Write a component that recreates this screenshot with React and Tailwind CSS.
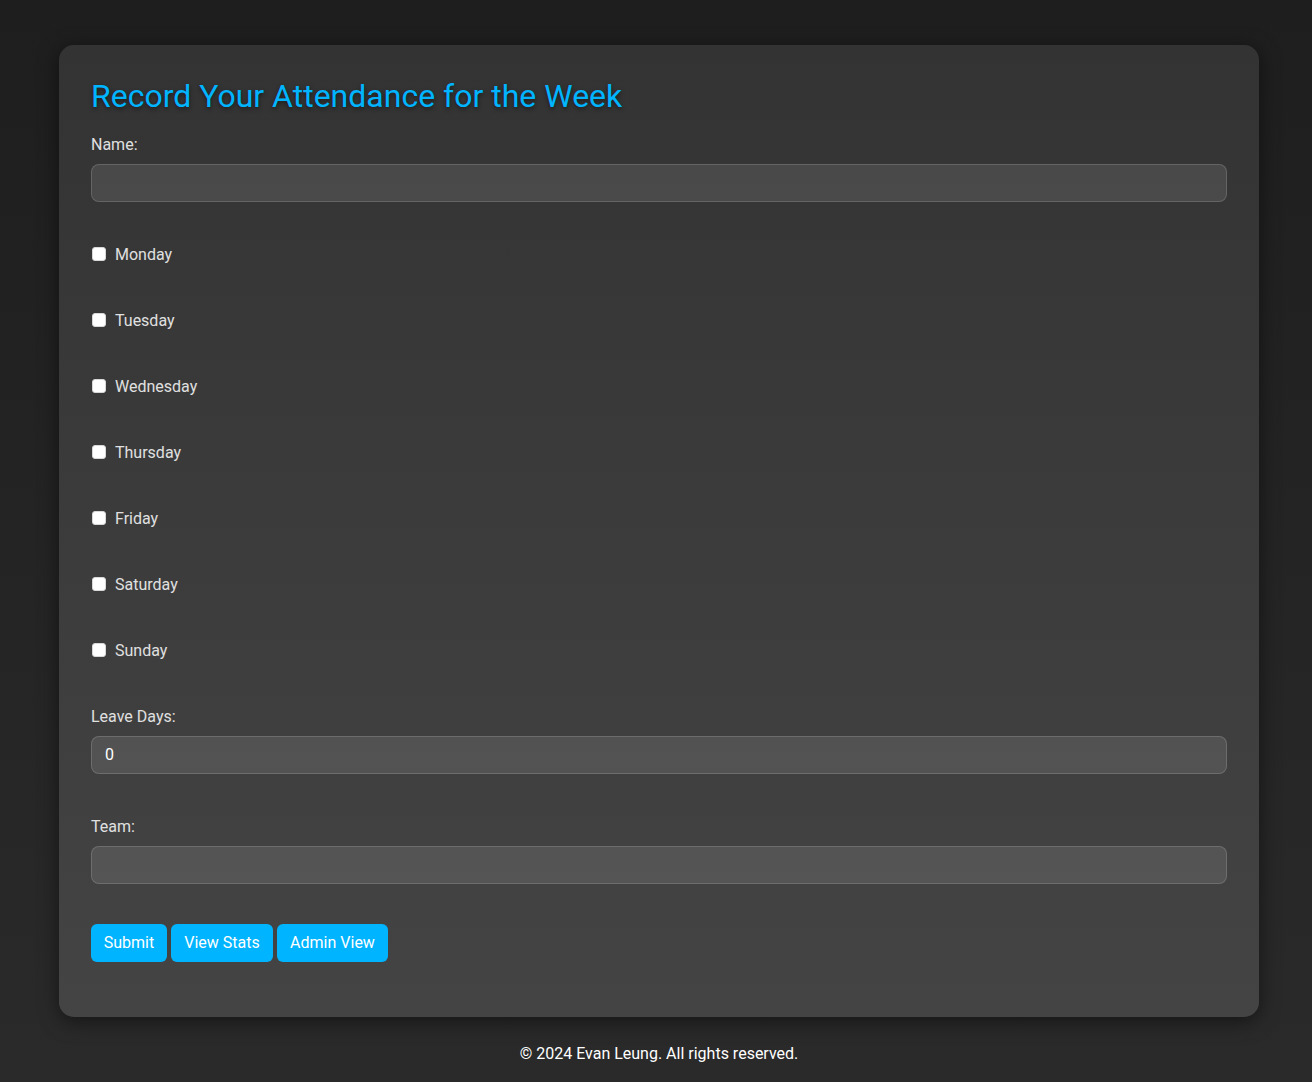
import React from "react";

const days = ["Monday", "Tuesday", "Wednesday", "Thursday", "Friday", "Saturday", "Sunday"];

function Checkbox() {
  return <span className="inline-block w-[14px] h-[14px] rounded-[3px] bg-white border border-[#d8d8d8]" />;
}

export default function App() {
  return (
    <div
      className="min-h-[1082px] w-full bg-gradient-to-b from-[#1e1e1e] to-[#2a2a2a] text-[#e6e6e6]"
      style={{ fontFamily: "Roboto, 'Liberation Sans', sans-serif" }}
    >
      <div className="pl-[6px] pt-[45px] flex flex-col items-center">
        <div className="w-[1200px] rounded-[15px] bg-gradient-to-b from-[#333333] to-[#444444] shadow-[0_4px_20px_rgba(0,0,0,0.5)] px-[32px] pt-[32px] pb-[55px]">
          <h1 className="text-[32px] leading-[38px] text-[#00b4ff] [text-shadow:0_2px_4px_rgba(0,0,0,0.5)]">
            Record Your Attendance for the Week
          </h1>

          <div className="mt-[20px] text-[16px] leading-[18px] pt-[1px] h-[18px] text-[#e0e0e0]">Name:</div>
          <div className="mt-[11px] h-[38px] rounded-[8px] bg-white/10 border border-white/15" />

          <div className="mt-[43px] flex flex-col gap-[48px]">
            {days.map((d) => (
              <div key={d} className="flex items-center h-[18px] gap-[9px] pl-[1px]">
                <Checkbox />
                <span className="text-[16px] leading-[18px] pt-[1px] text-[#e0e0e0]">{d}</span>
              </div>
            ))}
          </div>

          <div className="mt-[48px] text-[16px] leading-[18px] pt-[1px] h-[18px] text-[#e0e0e0]">Leave Days:</div>
          <div className="mt-[11px] h-[38px] rounded-[8px] bg-white/10 border border-white/15 flex items-center px-[13px] text-[16px] text-white">
            0
          </div>

          <div className="mt-[43px] text-[16px] leading-[18px] pt-[1px] h-[18px] text-[#e0e0e0]">Team:</div>
          <div className="mt-[11px] h-[38px] rounded-[8px] bg-white/10 border border-white/15" />

          <div className="mt-[40px] flex gap-[4px]">
            {[
              ["Submit", "w-[76px]"],
              ["View Stats", "w-[102px]"],
              ["Admin View", "w-[111px]"],
            ].map(([t, w]) => (
              <button
                key={t}
                className={`${w} h-[38px] rounded-[6px] bg-[#00b4ff] text-white text-[16px] flex items-center justify-center`}
              >
                {t}
              </button>
            ))}
          </div>
        </div>

        <div className="mt-[27px] text-[16px] leading-[18px] pt-[1px] text-white">
          © 2024 Evan Leung. All rights reserved.
        </div>
      </div>
    </div>
  );
}
